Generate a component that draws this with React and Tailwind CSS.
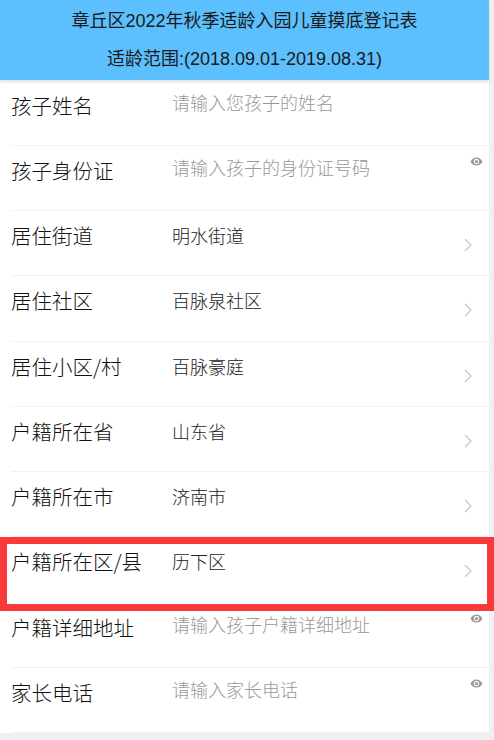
import React from 'react';

const font = { fontFamily: '"Liberation Sans", "Noto Sans CJK SC", sans-serif' };
const cjk = { fontFamily: '"Noto Sans CJK SC", "Liberation Sans", sans-serif' };

const rows = [
  { label: '孩子姓名', placeholder: '请输入您孩子的姓名' },
  { label: '孩子身份证', placeholder: '请输入孩子的身份证号码', eye: true },
  { label: '居住街道', value: '明水街道', arrow: true },
  { label: '居住社区', value: '百脉泉社区', arrow: true },
  { label: '居住小区/村', value: '百脉豪庭', arrow: true },
  { label: '户籍所在省', value: '山东省', arrow: true },
  { label: '户籍所在市', value: '济南市', arrow: true },
  { label: '户籍所在区/县', value: '历下区', arrow: true },
  { label: '户籍详细地址', placeholder: '请输入孩子户籍详细地址', eye: true },
  { label: '家长电话', placeholder: '请输入家长电话', eye: true },
];

function Chevron() {
  return (
    <svg width="8" height="14" viewBox="0 0 8 14" className="ml-auto mt-[27px] mr-[17px] shrink-0">
      <polyline points="1,1 7,7 1,13" fill="none" stroke="#c4c4c4" strokeWidth="1.2" />
    </svg>
  );
}

function Eye() {
  return (
    <svg width="13" height="9" viewBox="0 4 24 16" className="ml-auto mt-[11px] mr-[6px] shrink-0">
      <path
        fill="#9a9a9a"
        d="M12 4.5C7 4.5 2.73 7.61 1 12c1.73 4.39 6 7.5 11 7.5s9.27-3.11 11-7.5c-1.73-4.39-6-7.5-11-7.5zM12 17c-2.76 0-5-2.24-5-5s2.24-5 5-5 5 2.24 5 5-2.24 5-5 5zm0-8c-1.66 0-3 1.34-3 3s1.34 3 3 3 3-1.34 3-3-1.34-3-3-3z"
      />
    </svg>
  );
}

export default function App() {
  return (
    <div className="w-[494px] h-[740px] bg-[#f0f0f2] overflow-hidden" style={font}>
      <div className="relative w-[489px] bg-white">
        {/* Header */}
        <div className="h-[80px] bg-[#5bc0fd] flex flex-col items-center shadow-[0_2px_3px_rgba(0,0,0,0.12)] relative z-10">
          <div className="mt-[8px] text-[18px] leading-[26px] text-[#1a1a1a]">章丘区2022年秋季适龄入园儿童摸底登记表</div>
          <div className="mt-[12px] text-[18px] leading-[26px] text-[#1a1a1a]">适龄范围:(2018.09.01-2019.08.31)</div>
        </div>

        {/* Form rows */}
        <div className="pt-[0.5px] font-light" style={cjk}>
          {rows.map((row) => (
            <div key={row.label} className="ml-[11px] h-[65.25px] border-b border-[#f1f1f1] flex items-start">
              <div className="w-[161px] shrink-0 pt-[10px] text-[20.5px] leading-[28px] text-[#111]">{row.label}</div>
              {row.value ? (
                <div className="pt-[11px] text-[18px] leading-[26px] text-[#222]">{row.value}</div>
              ) : (
                <div className="pt-[8px] text-[18px] leading-[26px] text-[#999]">{row.placeholder}</div>
              )}
              {row.arrow && <Chevron />}
              {row.eye && <Eye />}
            </div>
          ))}
        </div>

        {/* Highlight annotation */}
        <div className="absolute left-0 top-[537px] w-[494px] h-[74px] border-[7px] border-[#f83a3a] pointer-events-none z-20" />
      </div>
    </div>
  );
}
